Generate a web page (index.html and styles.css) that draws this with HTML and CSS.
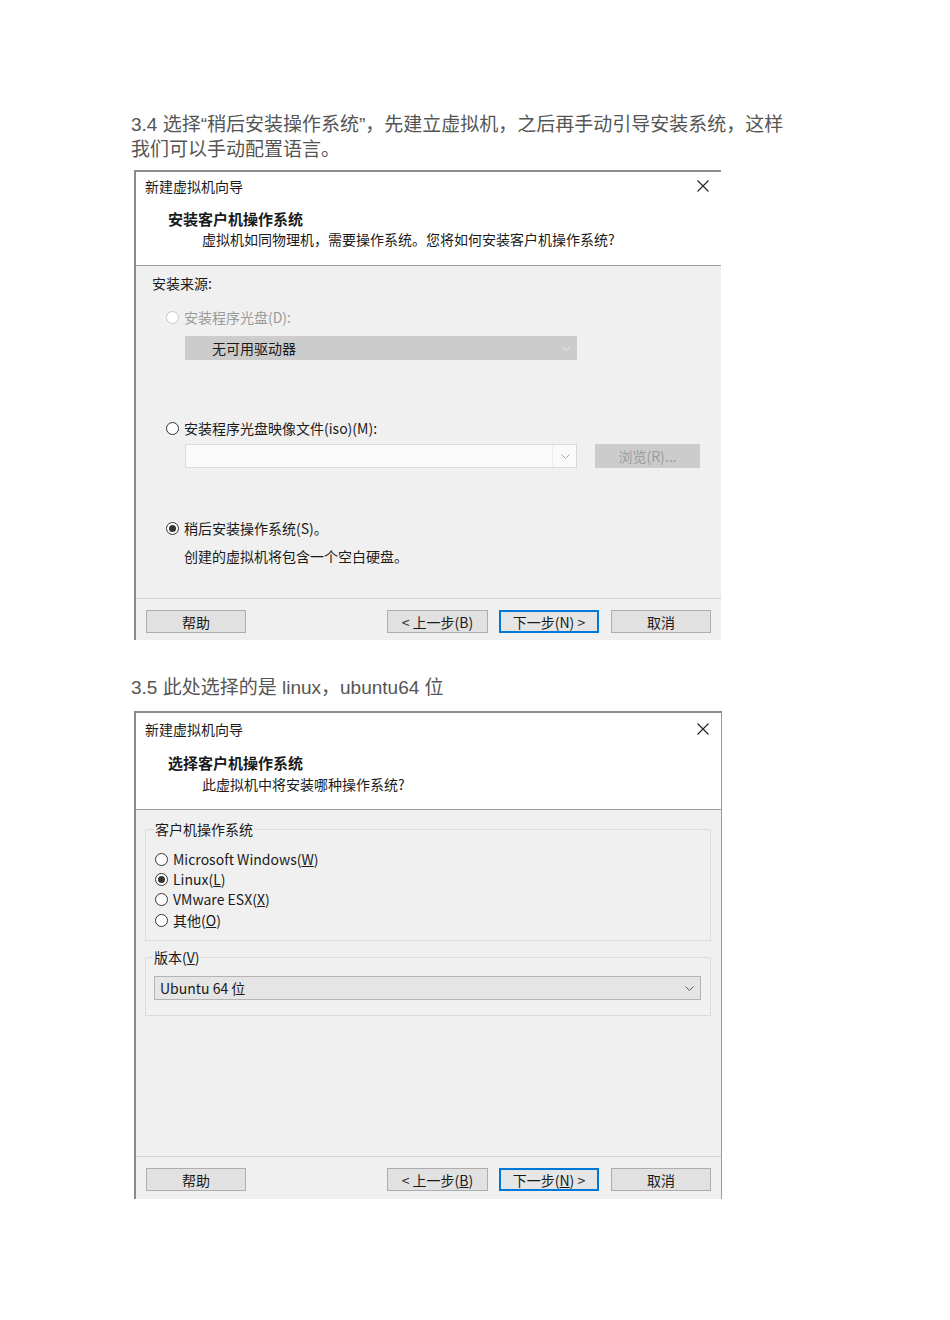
FILE: index.html
```html
<!DOCTYPE html>
<html lang="zh-CN">
<head>
    <meta charset="UTF-8">
    <meta name="viewport" content="width=device-width, initial-scale=1.0">
    <title>VMware 新建虚拟机</title>
    <link rel="stylesheet" href="styles.css">
</head>
<body>
    <div class="article">
        <!-- Step 3.4 -->
        <p class="step step-first">3.4 选择“稍后安装操作系统”，先建立虚拟机，之后再手动引导安装系统，这样我们可以手动配置语言。</p>

        <div class="wizard wizard-install">
            <div class="wizard-title">
                <span>新建虚拟机向导</span>
                <svg class="close" width="12" height="12" viewBox="0 0 12 12"><path d="M0.5 0.5 L11.5 11.5 M11.5 0.5 L0.5 11.5" stroke="#222" stroke-width="1.1" fill="none"/></svg>
            </div>
            <div class="wizard-head">
                <h2>安装客户机操作系统</h2>
                <p>虚拟机如同物理机，需要操作系统。您将如何安装客户机操作系统?</p>
            </div>
            <div class="wizard-body">
                <div class="source-label">安装来源:</div>

                <div class="radio-row radio-disc disabled">
                    <span class="radio"></span>
                    <span>安装程序光盘(D):</span>
                </div>
                <div class="combo combo-disabled">
                    <span>无可用驱动器</span>
                    <svg class="chevron" width="9" height="5" viewBox="0 0 9 5"><path d="M0.5 0.5 L4.5 4.5 L8.5 0.5" stroke="#e6e6e6" fill="none"/></svg>
                </div>

                <div class="radio-row radio-iso">
                    <span class="radio"></span>
                    <span>安装程序光盘映像文件(iso)(M):</span>
                </div>
                <div class="iso-row">
                    <div class="combo combo-empty">
                        <span></span>
                        <span class="combo-split"></span>
                        <svg class="chevron" width="9" height="5" viewBox="0 0 9 5"><path d="M0.5 0.5 L4.5 4.5 L8.5 0.5" stroke="#a8a8a8" fill="none"/></svg>
                    </div>
                    <div class="btn btn-disabled">浏览(R)...</div>
                </div>

                <div class="radio-row radio-later">
                    <span class="radio checked"></span>
                    <span>稍后安装操作系统(S)。</span>
                </div>
                <div class="later-note">创建的虚拟机将包含一个空白硬盘。</div>
            </div>
            <div class="wizard-foot">
                <div class="btn">帮助</div>
                <div class="btn-group">
                    <div class="btn btn-back">&lt; 上一步(B)</div>
                    <div class="btn btn-default">下一步(N) &gt;</div>
                    <div class="btn btn-cancel">取消</div>
                </div>
            </div>
        </div>

        <!-- Step 3.5 -->
        <p class="step step-second">3.5 此处选择的是 linux，ubuntu64 位</p>

        <div class="wizard wizard-os">
            <div class="wizard-title">
                <span>新建虚拟机向导</span>
                <svg class="close" width="12" height="12" viewBox="0 0 12 12"><path d="M0.5 0.5 L11.5 11.5 M11.5 0.5 L0.5 11.5" stroke="#222" stroke-width="1.1" fill="none"/></svg>
            </div>
            <div class="wizard-head">
                <h2>选择客户机操作系统</h2>
                <p>此虚拟机中将安装哪种操作系统?</p>
            </div>
            <div class="wizard-body">
                <fieldset class="group group-os">
                    <legend>客户机操作系统</legend>
                    <div class="radio-row"><span class="radio"></span><span>Microsoft Windows(<u>W</u>)</span></div>
                    <div class="radio-row"><span class="radio checked"></span><span>Linux(<u>L</u>)</span></div>
                    <div class="radio-row"><span class="radio"></span><span>VMware ESX(<u>X</u>)</span></div>
                    <div class="radio-row"><span class="radio"></span><span>其他(<u>O</u>)</span></div>
                </fieldset>

                <fieldset class="group group-version">
                    <legend>版本(<u>V</u>)</legend>
                    <div class="combo combo-version">
                        <span>Ubuntu 64 位</span>
                        <svg class="chevron" width="9" height="5" viewBox="0 0 9 5"><path d="M0.5 0.5 L4.5 4.5 L8.5 0.5" stroke="#555" fill="none"/></svg>
                    </div>
                </fieldset>
            </div>
            <div class="wizard-foot">
                <div class="btn">帮助</div>
                <div class="btn-group">
                    <div class="btn btn-back">&lt; 上一步(<u>B</u>)</div>
                    <div class="btn btn-default">下一步(<u>N</u>) &gt;</div>
                    <div class="btn btn-cancel">取消</div>
                </div>
            </div>
        </div>
    </div>
</body>
</html>
```

FILE: styles.css
```css
/* General Styles */
body {
    margin: 0;
    padding: 0;
    background-color: #ffffff;
    font-family: "Liberation Sans", "Noto Sans CJK SC", sans-serif;
}

/* Article */
.article {
    width: 660px;
    margin-left: 131px;
    padding-top: 112px;
}

.step {
    margin: 0;
    font-size: 19px;
    line-height: 25px;
    color: #555555;
}

.step-second {
    margin-top: 35px;
}

/* Wizard dialog */
.wizard {
    width: 585px;
    margin-left: 3px;
    background-color: #ffffff;
    border-top: 2px solid #8c8c8c;
    border-left: 2px solid #8c8c8c;
    font-family: "Noto Sans CJK SC", sans-serif;
    font-size: 14px;
    color: #1a1a1a;
}

.wizard-install {
    margin-top: 8px;
}

.wizard-os {
    margin-top: 11px;
    border-right: 1px solid #9a9a9a;
}

.wizard-title {
    height: 28px;
    padding: 0 12px 0 9px;
    display: flex;
    justify-content: space-between;
    align-items: center;
    line-height: 20px;
}

.wizard-title span {
    margin-top: -1px;
}

.wizard-os .wizard-title {
    height: 32px;
}

.wizard-head {
    height: 56px;
    padding: 9px 0 0 32px;
    border-bottom: 1px solid #a0a0a0;
}

.wizard-os .wizard-head {
    height: 56px;
    padding-top: 8px;
}

.wizard-head h2 {
    margin: 0;
    font-size: 15px;
    line-height: 20px;
    font-weight: bold;
}

.wizard-head p {
    margin: 0 0 0 34px;
    line-height: 20px;
}

.wizard-os .wizard-head p {
    margin-top: 1px;
}

.wizard-body {
    height: 332px;
    padding-left: 16px;
    background-color: #f0f0f0;
    border-bottom: 1px solid #d4d4d4;
    line-height: 20px;
}

.wizard-os .wizard-body {
    height: 346px;
    padding-left: 9px;
    padding-right: 10px;
    display: flow-root;
}

.wizard-foot {
    height: 41px;
    padding: 11px 10px 0 10px;
    box-sizing: border-box;
    background-color: #f0f0f0;
    display: flex;
    justify-content: space-between;
    align-items: flex-start;
}

.wizard-os .wizard-foot {
    height: 42px;
}

.btn-group {
    display: flex;
    gap: 11px;
}

/* Buttons */
.btn {
    width: 100px;
    height: 23px;
    box-sizing: border-box;
    border: 1px solid #adadad;
    background-color: #e1e1e1;
    display: flex;
    justify-content: center;
    align-items: center;
    font-size: 14px;
    color: #1a1a1a;
}

.btn-back {
    width: 101px;
}

.btn-cancel {
    margin-left: 1px;
}

.btn-default {
    border: 2px solid #0078d7;
    background-color: #e5e5e5;
}

.btn-disabled {
    width: 105px;
    height: 24px;
    border-color: #cccccc;
    background-color: #cccccc;
    color: #9c9c9c;
}

/* Radio buttons */
.radio-row {
    display: flex;
    align-items: center;
    gap: 5px;
    height: 20px;
}

.radio {
    width: 13px;
    height: 13px;
    box-sizing: border-box;
    border: 1px solid #333333;
    border-radius: 50%;
    background-color: #ffffff;
    display: flex;
    justify-content: center;
    align-items: center;
    flex-shrink: 0;
}

.radio.checked::after {
    content: "";
    width: 7px;
    height: 7px;
    border-radius: 50%;
    background-color: #333333;
}

.radio-row.disabled {
    color: #9a9a9a;
}

.radio-row.disabled .radio {
    border-color: #c8c8c8;
}

/* Install source section */
.source-label {
    padding-top: 7px;
}

.radio-disc {
    margin: 14px 0 0 14px;
}

.radio-iso {
    margin: 58px 0 0 14px;
}

.radio-later {
    margin: 50px 0 0 14px;
}

.later-note {
    margin: 8px 0 0 32px;
}

.iso-row {
    display: flex;
    align-items: center;
    gap: 18px;
    margin: 6px 0 0 33px;
}

/* Combo boxes */
.combo {
    width: 392px;
    height: 24px;
    box-sizing: border-box;
    display: flex;
    align-items: center;
    justify-content: space-between;
    padding: 0 6px 0 27px;
}

.combo-disabled {
    margin: 9px 0 0 33px;
    background-color: #cccccc;
}

.combo-empty {
    background-color: #fafafa;
    border: 1px solid #d9d9d9;
    padding-left: 6px;
}

.combo-empty span:first-child {
    flex: 1;
}

.combo-split {
    width: 1px;
    height: 22px;
    margin-right: 8px;
    background-color: #efefef;
}

.combo-version {
    width: 547px;
    padding-left: 5px;
    padding-right: 6px;
    background-color: #e5e5e5;
    border: 1px solid #b4b4b4;
}

/* Group boxes */
.group {
    margin: 9px 0 0 0;
    padding: 0 9px 10px 9px;
    border: 1px solid #dcdcdc;
    min-width: 0;
}

.group legend {
    padding: 0 1px;
    margin-left: -1px;
    line-height: 20px;
}

.group-os legend + .radio-row {
    margin-top: 10px;
}

.group-os .radio-row:last-child {
    margin-top: 1px;
}

.group-version {
    margin-top: 6px;
    padding: 9px 8px 15px 8px;
}
```
